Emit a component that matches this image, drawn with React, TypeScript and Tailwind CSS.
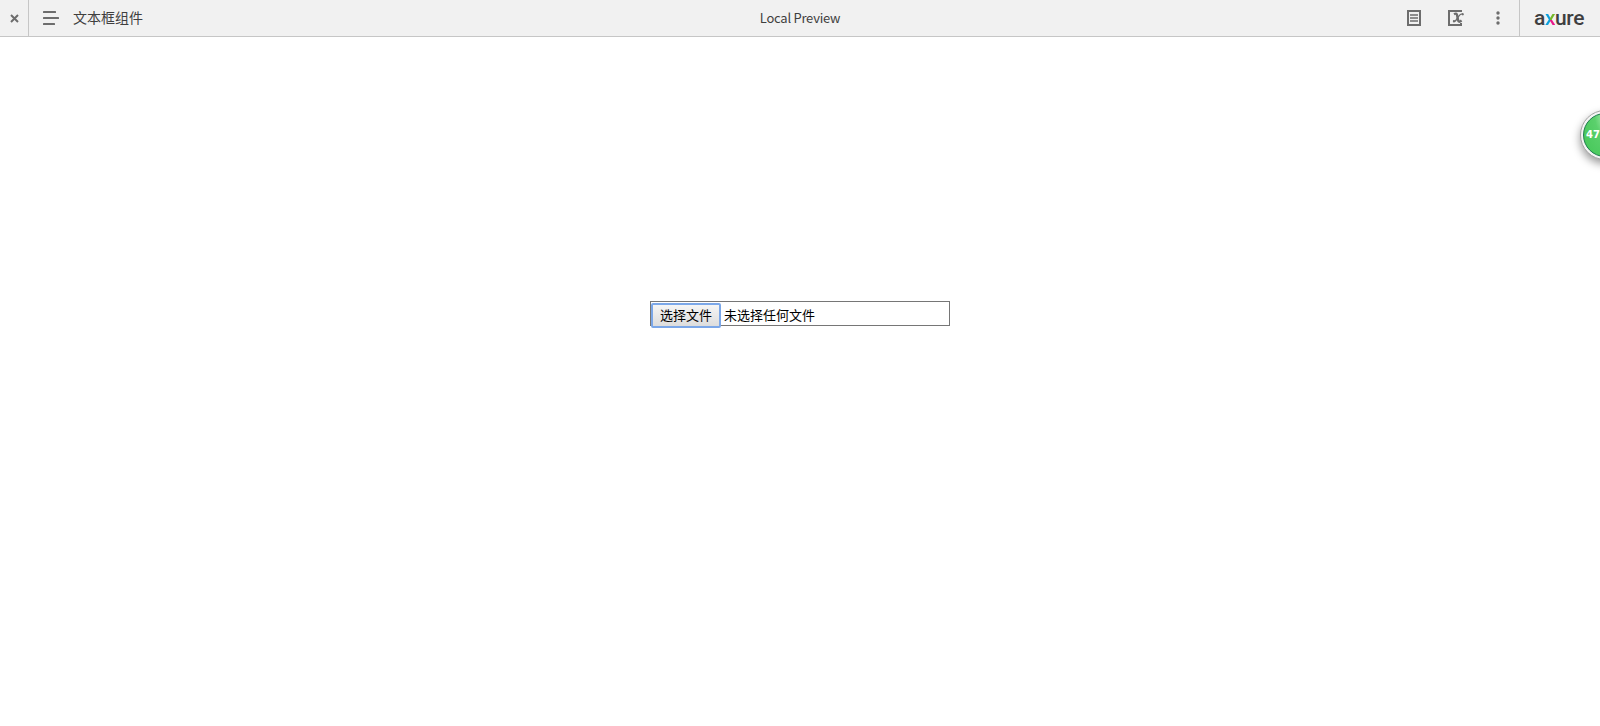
import React from "react";

const CloseIcon: React.FC<{}> = () => (
  <svg width="9" height="9" viewBox="0 0 9 9" fill="none">
    <path d="M1 1L8 8M8 1L1 8" stroke="#6d6d6d" strokeWidth="2" />
  </svg>
);

const MenuIcon: React.FC<{}> = () => (
  <svg width="16" height="14" viewBox="0 0 16 14" fill="#6d6d6d">
    <rect x="0" y="0" width="13" height="2" rx="0.5" />
    <rect x="0" y="6" width="16" height="2" rx="0.5" />
    <rect x="0" y="12" width="12" height="2" rx="0.5" />
  </svg>
);

const NotesIcon: React.FC<{}> = () => (
  <svg width="14" height="16" viewBox="0 0 14 16" fill="none">
    <rect x="1" y="1" width="12" height="14" stroke="#6d6d6d" strokeWidth="2" />
    <path d="M3 5H11M3 8H11M3 11H11" stroke="#6d6d6d" strokeWidth="1.7" />
  </svg>
);

const VariablesIcon: React.FC<{}> = () => (
  <svg width="17" height="16" viewBox="0 0 17 16" fill="none" stroke="#6d6d6d">
    <path d="M14 1H1V15H13V13" strokeWidth="2" />
    <path d="M6 4.2C8.3 3 8.9 3.6 9.3 6.2L10 9.8C10.4 12 11.2 12.3 13.6 10.6" strokeWidth="2.4" />
    <path d="M15 3.9C12.2 3.1 11.4 5.2 9.7 7.6C8.2 10.2 7.2 12.2 5.2 11.6" strokeWidth="1.3" />
    <circle cx="14.8" cy="4.3" r="1.1" fill="#6d6d6d" stroke="none" />
    <circle cx="5.9" cy="11.2" r="1.1" fill="#6d6d6d" stroke="none" />
  </svg>
);

const MoreIcon: React.FC<{}> = () => (
  <svg width="4" height="14" viewBox="0 0 4 14" fill="#6d6d6d">
    <circle cx="2" cy="2" r="1.7" />
    <circle cx="2" cy="7" r="1.7" />
    <circle cx="2" cy="12" r="1.7" />
  </svg>
);

const Logo: React.FC<{}> = () => (
  <div className="flex font-['Roboto',sans-serif] text-[21px] leading-[30px] font-medium tracking-[-0.4px] text-[#3f3f41]">
    <span>a</span>
    <span className="bg-[conic-gradient(at_50%_56%,#76b82a_0deg_90deg,#e8178a_90deg_180deg,#0c9fdc_180deg)] bg-clip-text text-transparent">
      x
    </span>
    <span>ure</span>
  </div>
);

const Header: React.FC<{}> = () => (
  <header className="flex h-[37px] border-b border-[#c6c6c6] bg-[#f1f1f1] text-[#3f3f3f]">
    <div className="flex flex-1 items-center">
      <button className="flex h-full w-[29px] items-center justify-center border-r border-[#c6c6c6]">
        <CloseIcon />
      </button>
      <button className="ml-3.5">
        <MenuIcon />
      </button>
      <span className="ml-3.5 pb-0.5 text-sm">文本框组件</span>
    </div>
    <div className="flex items-center pb-px text-[13px] tracking-[-0.25px]">Local Preview</div>
    <div className="flex flex-1 items-center justify-end">
      <button className="mr-[27px]">
        <NotesIcon />
      </button>
      <button className="mr-[31px]">
        <VariablesIcon />
      </button>
      <button className="mr-[19px]">
        <MoreIcon />
      </button>
      <div className="flex h-full w-[81px] items-center border-l border-[#c6c6c6] pl-3.5">
        <Logo />
      </div>
    </div>
  </header>
);

const FileField: React.FC<{}> = () => (
  <div className="flex h-[25px] w-[300px] border border-[#767676] bg-white text-[13px] text-black">
    <button className="mt-px h-[25px] w-[70px] shrink-0 rounded-[2px] border-2 border-[#7ba7e8] bg-linear-to-b from-[#f5f5f5] to-[#dddddd] pb-0.5 leading-[19px]">
      选择文件
    </button>
    <span className="ml-[3px] mt-0.5 leading-[22px]">未选择任何文件</span>
  </div>
);

const App: React.FC<{}> = () => {
  return (
    <div className="relative h-screen w-full overflow-hidden bg-white font-['Noto_Sans_CJK_SC',sans-serif]">
      <Header />
      <main className="flex justify-center pt-[264px]">
        <FileField />
      </main>
      {/* floating score ball, half hidden behind the window edge */}
      <div className="absolute -right-[30px] top-[110px] size-[50px] rounded-full border border-[#a5a5a5] bg-[#f4f4f4] p-0.5 shadow-[0_4px_8px_rgba(0,0,0,0.4)]">
        <div className="flex size-full items-center rounded-full border border-[#1f7d50] bg-radial-[at_50%_0%] from-[#a5ecae] via-[#5bd06c] via-35% to-[#42c656] pb-0.5 pl-0.5 font-['DejaVu_Sans',sans-serif] text-[10px] font-bold text-white">
          47
        </div>
      </div>
    </div>
  );
};

export default App;
